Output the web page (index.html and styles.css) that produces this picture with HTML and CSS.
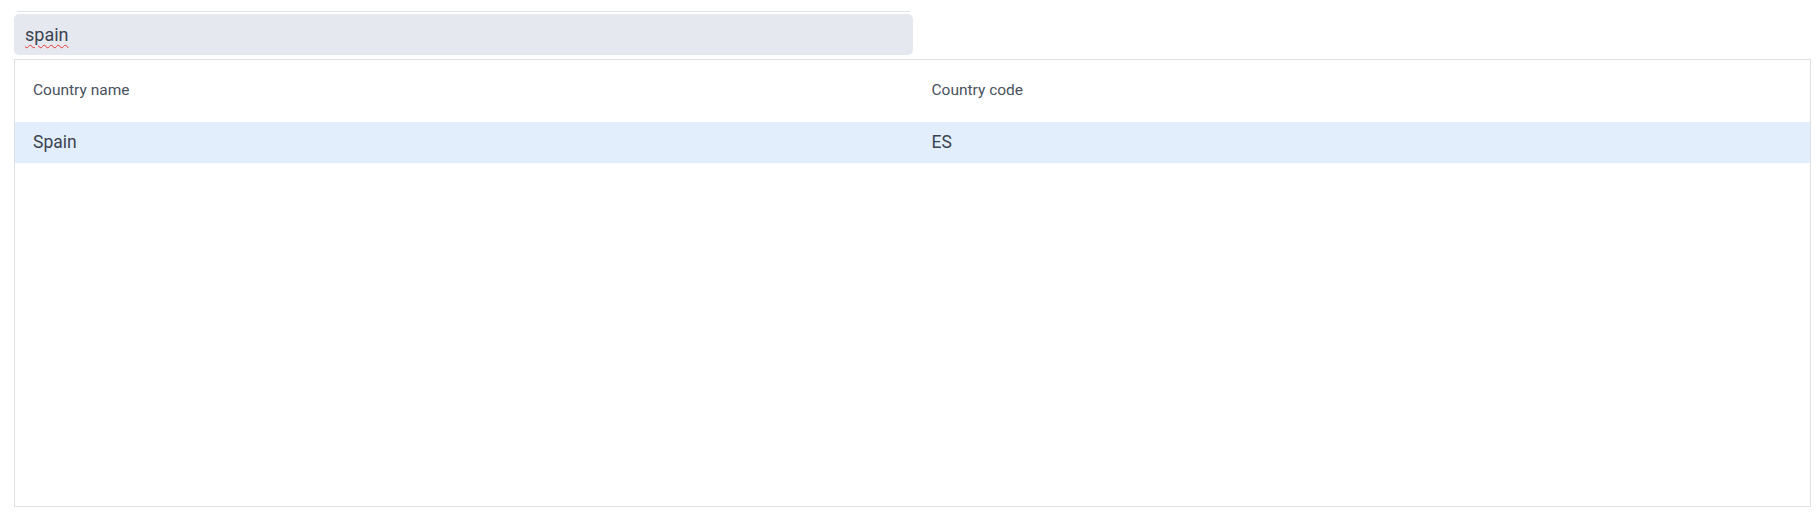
FILE: index.html
```html
<!DOCTYPE html>
<html lang="en">
<head>
<meta charset="utf-8">
<title>Countries</title>
<link rel="stylesheet" href="styles.css">
</head>
<body>
<div class="page">
  <div class="search">
    <div class="search-rule"></div>
    <div class="search-box" role="textbox"><span class="typed">spain</span></div>
  </div>
  <div class="grid">
    <div class="row head">
      <div class="cell">Country name</div>
      <div class="cell">Country code</div>
    </div>
    <div class="row selected">
      <div class="cell">Spain</div>
      <div class="cell">ES</div>
    </div>
  </div>
</div>
</body>
</html>
```

FILE: styles.css
```css
* { box-sizing: border-box; }
html, body { margin: 0; background: #ffffff; }
body { font-family: Roboto, "Noto Sans", "Liberation Sans", sans-serif; color: #374151; }
.page { padding: 11px 8px 0 14px; display: flex; flex-direction: column; }
.search { width: 899px; display: flex; flex-direction: column; }
.search-rule { height: 1px; margin: 0 3px 0 3px; background: #dce4ef; }
.search-box {
  margin-top: 2px;
  height: 41px;
  background: #e5e9ef;
  border-radius: 5px;
  padding: 0 11px;
  display: flex;
  align-items: center;
  font-size: 18px;
  color: #3b4351;
}
.typed { text-decoration: underline wavy #e53935; text-decoration-thickness: 1px; text-underline-offset: 3px; }
.grid {
  margin-top: 4px;
  height: 448px;
  border: 1px solid #dde1e6;
  display: flex;
  flex-direction: column;
}
.row { display: grid; grid-template-columns: 1fr 1fr; align-items: center; }
.cell { padding: 0 18px; }
.cell + .cell { padding-left: 19px; }
.head { height: 62px; font-size: 15.5px; color: #4b5260; padding-bottom: 2px; }
.selected { height: 41px; background: #e2eefc; font-size: 17.5px; color: #3b4352; padding-bottom: 1px; }
```
